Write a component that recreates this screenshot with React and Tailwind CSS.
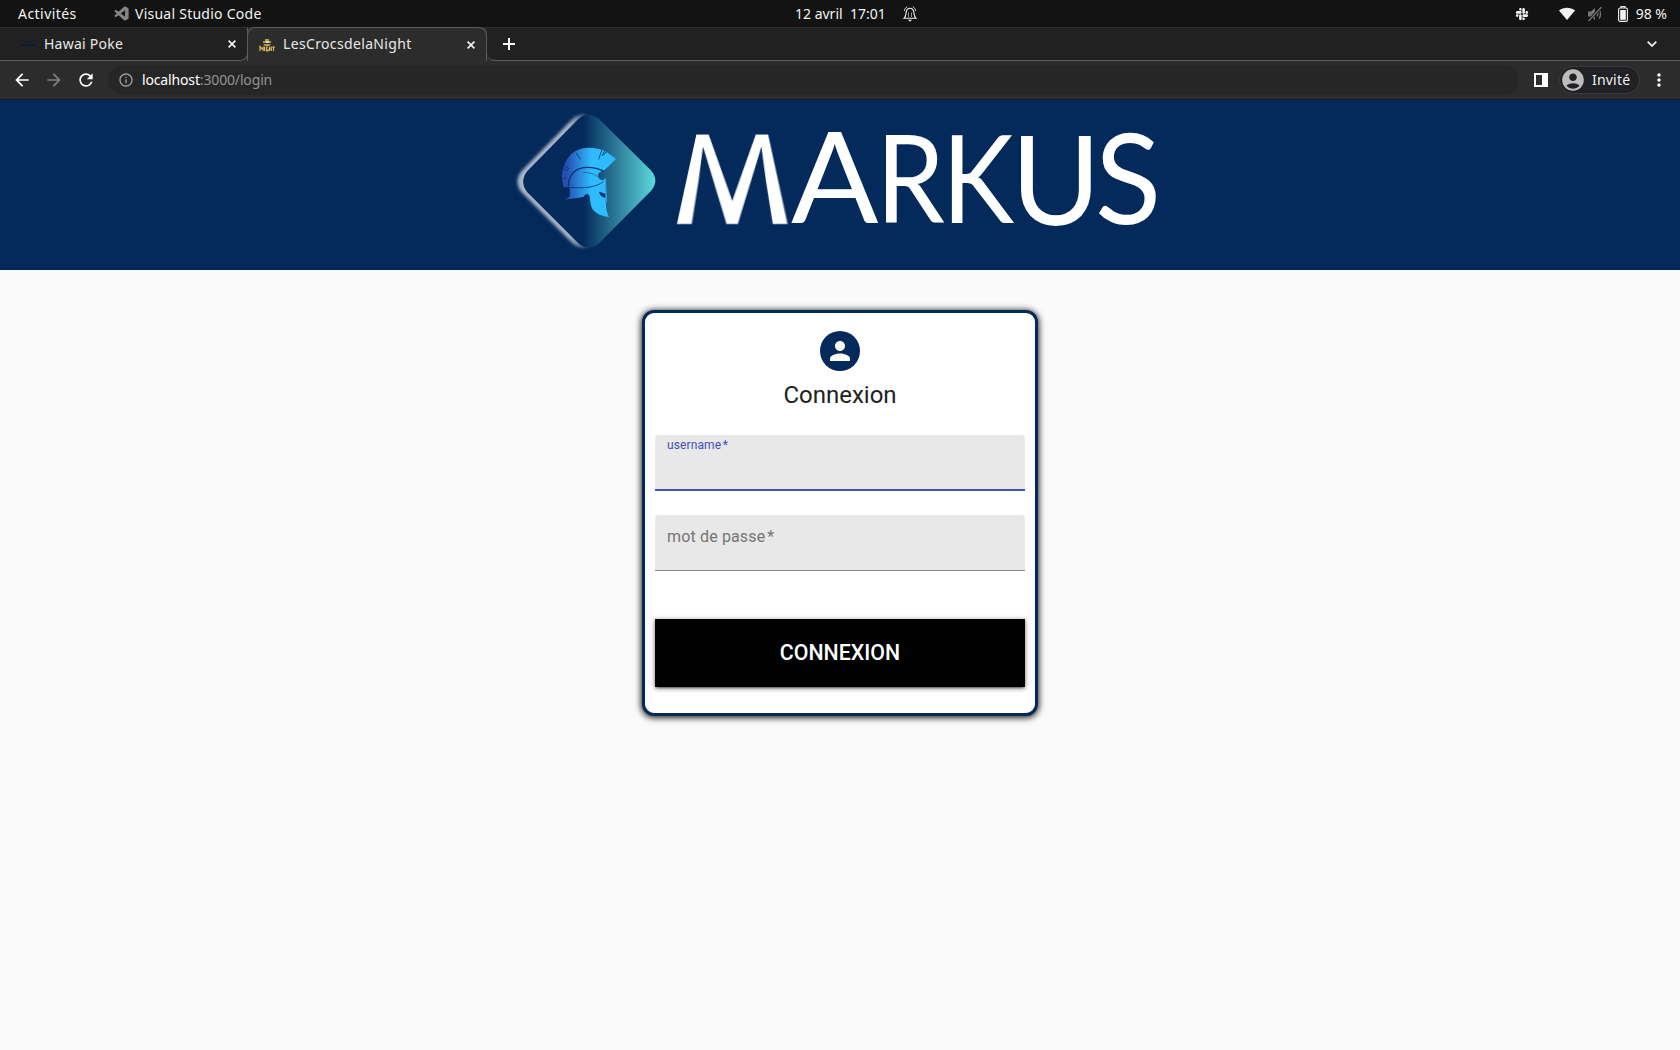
import React from "react";
import {
  MdArrowBack,
  MdArrowForward,
  MdRefresh,
  MdInfoOutline,
  MdAccountCircle,
  MdMoreVert,
  MdPerson,
} from "react-icons/md";
import { FaSlack } from "react-icons/fa";
import { BiLogoVisualStudio } from "react-icons/bi";

function Bell() {
  return (
    <svg className="ml-4 h-4 w-4" viewBox="0 0 16 16" fill="none" stroke="#f2f2f2" strokeWidth="1.1">
      <path d="M2 12.300C4 10.500 3.800 8.500 4.200 6.200 4.600 3.500 6 2.200 8 2.200s3.400 1.300 3.800 4c.4 2.300.2 4.300 2.200 6.100z" />
      <path d="M6.500 11V6.500M9.500 11V6.500" strokeWidth=".6" />
      <path d="M6 13.800h4L8 15.800z" fill="#f2f2f2" stroke="none" />
      <path d="M2.300 5C2.700 3 3.600 1.600 5.200.8M13.700 5C13.300 3 12.400 1.600 10.800.8" strokeWidth=".9" />
    </svg>
  );
}

function Muted() {
  return (
    <svg className="ml-[12px] h-4 w-4" viewBox="0 0 16 16" fill="none" stroke="#777" strokeWidth="1.300">
      <path d="M1 5.500h3L8 2v12l-4-3.500H1z" fill="#777" stroke="none" />
      <path d="M10 5.500c1 1.500 1 3.500 0 5M12 3.500c2 2.500 2 6.500 0 9" />
      <path d="M1.500 15L14.500 1" stroke="#131313" strokeWidth="3" />
      <path d="M1.500 15L14.500 1" strokeWidth="1.200" />
    </svg>
  );
}

function SystemBar() {
  return (
    <div className="grid h-[27px] grid-cols-3 items-center bg-[#131313] text-[14px] leading-[26px] text-[#f2f2f2]">
      <div className="flex items-center pl-[18px]">
        <span className="w-[95px] tracking-[0.45px]">Activités</span>
        <BiLogoVisualStudio className="mr-[5px] h-[17px] w-[17px] text-[#858585]" />
        <span className="tracking-[0.25px]">Visual Studio Code</span>
      </div>
      <div className="flex items-center pl-[235px]">
        <span className="whitespace-pre">{"12 avril  17:01"}</span>
        <Bell />
      </div>
      <div className="flex items-center justify-end pr-[13px]">
        <FaSlack className="h-[14px] w-[14px]" />
        <svg className="ml-[30px] h-[14px] w-4" viewBox="0 0 16 14">
          <path d="M0 3.500C4.500-.2 11.500-.2 16 3.500L8 13z" fill="#f2f2f2" />
        </svg>
        <Muted />
        <svg className="ml-[15px] mr-2 h-4 w-[10px]" viewBox="0 0 10 16" fill="none" stroke="#f2f2f2" strokeWidth="1.100">
          <path d="M3 2V.6h4V2" />
          <rect x=".6" y="2" width="8.800" height="13.400" rx="1.500" />
          <rect x="2.200" y="4" width="5.600" height="9.800" fill="#f2f2f2" stroke="none" />
        </svg>
        <span>98 %</span>
      </div>
    </div>
  );
}

function Close() {
  return (
    <svg className="h-2 w-2" viewBox="0 0 8 8" stroke="#f0f0f0" strokeWidth="1.700">
      <path d="M.6.6l6.800 6.800M7.400.6L.6 7.400" />
    </svg>
  );
}

function TabStrip() {
  return (
    <div className="flex h-[34px] bg-[#2c2c2c] text-[14px] text-[#e8e8e8]">
      <div className="flex w-[248px] items-center rounded-br-lg border-t border-t-[#303030] border-r border-b border-r-[#5b5b5b] border-b-[#5b5b5b] bg-[#212121] pr-[11px] pl-[21px]">
        <svg className="mr-[9px] h-[14px] w-[14px]" viewBox="0 0 14 14" stroke="#0b1838" strokeWidth="2">
          <path d="M4 5h6M0 8h14" strokeDasharray="2 .5" />
        </svg>
        <span className="flex-1 pb-[2px] tracking-[0.25px]">Hawai Poke</span>
        <Close />
      </div>
      <div className="-ml-px flex w-[240px] items-center rounded-t-lg border-t border-r border-l border-[#5b5b5b] bg-[#2c2c2c] pr-[11px] pl-[11px]">
        <svg className="mr-2 h-4 w-4" viewBox="0 0 16 16">
          <path d="M6 2h4v2h2v2H4V4h2zM4 7h8l-2 2H6z" fill="#b69a50" />
          <path d="M7 4h3v2H7z" fill="#ddd8cc" />
          <path d="M1 14V9.500l3 3.500V9.500M5.500 9.500V14M9 10H7.500v4H9v-2M10.500 9.500V14M12.300 9.500V14M10.500 12h2M13 10h3M14.500 10v4" fill="none" stroke="#dab65a" strokeWidth="1.200" />
        </svg>
        <span className="flex-1 pb-[2px] tracking-[0.35px]">LesCrocsdelaNight</span>
        <Close />
      </div>
      <div className="flex flex-1 items-center justify-between rounded-bl-lg border-t border-b border-t-[#303030] border-b-[#5b5b5b] bg-[#212121] pr-[23px] pl-4">
        <svg className="h-3 w-3" viewBox="0 0 12 12" stroke="#f4f4f4" strokeWidth="2">
          <path d="M6 0v12M0 6h12" />
        </svg>
        <svg className="h-[6px] w-[10px]" viewBox="0 0 10 6" fill="none" stroke="#e8e8e8" strokeWidth="1.800">
          <path d="M.7.7L5 5 9.300.7" />
        </svg>
      </div>
    </div>
  );
}

function Toolbar() {
  return (
    <div className="flex h-[39px] items-center border-b border-[#1b1b1b] bg-[#2c2c2c] text-[14px]">
      <MdArrowBack className="ml-[12px] h-5 w-5 text-white" />
      <MdArrowForward className="ml-3 h-5 w-5 text-[#808080]" />
      <MdRefresh className="ml-3 h-5 w-5 text-white" />
      <div className="ml-[12px] flex h-[30px] w-[1411px] items-center rounded-full bg-[#262626] pl-[10px]">
        <MdInfoOutline className="mr-2 h-4 w-4 text-[#9aa0a6]" />
        <span className="pb-[2px] tracking-[-0.15px] text-[#929292]"><span className="text-white">localhost</span>:3000/login</span>
      </div>
      <svg className="ml-[15px] h-[14px] w-[14px]" viewBox="0 0 14 14">
        <path d="M0 0h14v14H0zM2 2v10h6V2z" fill="#fff" fillRule="evenodd" />
      </svg>
      <div className="ml-[11px] flex h-[28px] w-[81px] items-center rounded-full border border-[#3c3c3c] bg-[#202124] text-[#f0f0f0]">
        <MdAccountCircle className="mr-[6px] h-[26px] w-[26px] text-[#bdbdbd]" />
        <span className="pb-[2px] tracking-[0.2px]">Invité</span>
      </div>
      <MdMoreVert className="ml-[9px] h-5 w-5 text-white" />
    </div>
  );
}

function Emblem() {
  const diamond =
    "M235 57Q265 32 297 57L452 210Q480 242 452 274L297 430Q265 456 235 430L82 277Q57 245 82 213Z";
  return (
    <svg className="h-[160px] w-[170px] shrink-0" viewBox="0 0 510 480">
      <defs>
        <linearGradient id="face" gradientUnits="userSpaceOnUse" x1="250" x2="466" y1="0" y2="0">
          <stop offset="0" stopColor="#042a5c" />
          <stop offset="1" stopColor="#5dd9df" />
        </linearGradient>
        <linearGradient id="rim" gradientUnits="userSpaceOnUse" x1="225" x2="310" y1="0" y2="0">
          <stop offset="0" stopColor="#a9b5c8" />
          <stop offset="1" stopColor="#a9b5c8" stopOpacity="0" />
        </linearGradient>
        <linearGradient id="helmet" gradientUnits="userSpaceOnUse" x1="200" x2="275" y1="0" y2="0">
          <stop offset="0" stopColor="#2450b4" />
          <stop offset="1" stopColor="#2fbcff" />
        </linearGradient>
        <filter id="soft" x="-20%" y="-20%" width="140%" height="140%">
          <feGaussianBlur stdDeviation="5" />
        </filter>
      </defs>
      <path d={diamond} fill="url(#rim)" filter="url(#soft)" transform="translate(-17 0)" />
      <path d={diamond} fill="url(#face)" />
      <path
        d="M348 177L319 155C303 146 285 143 265 143C215 144 186 184 186 235L191 262L209 262L210 286Q206 295 193 299L250 291L257 283Q264 279 268 287C271 298 271 316 278 328C289 343 308 349 327 351Q317 332 318 309L321 307L321 286L318 234L309 241Q293 238 294 224Q298 214 310 214Z"
        fill="url(#helmet)"
      />
      <g fill="none" stroke="#0a3470" strokeWidth="2.500">
        <path d="M205 260C205 218 232 202 262 202C287 202 301 208 312 214" strokeWidth="4" />
        <path d="M207 262C252 266 289 262 310 245" />
        <path d="M249 217C268 217 284 222 293 230" strokeWidth="1.500" />
        <path d="M228 158L242 178M306 148L296 178M314 152L306 168M322 154L309 165M192 196L208 207M189 206L203 211M187 236L200 233" />
      </g>
      <path d="M297 275Q309 277 316 282L316 293Q301 292 297 275Z" fill="#08326a" />
      <path d="M318 238V308" stroke="#1a6390" strokeWidth="2" />
    </svg>
  );
}

function Wordmark() {
  return (
    <h1 className="mt-[3px] flex h-[146px] font-['Lato'] text-[122px] leading-[146px] font-normal text-white">
      <span className="w-[121px]">
        <span className="inline-block translate-x-[9px] translate-y-[1px] origin-[50%_114px] font-['Roboto'] [transform:matrix3d(1.28,0,0,0,0,1.58,0,-0.0062,0,0,1,0,0,0,0,1)]">M</span>
      </span>
      <span className="w-[85px]"><span className="inline-block origin-[0_120px] scale-x-[1.06] scale-y-[1.03]">A</span></span>
      <span className="w-[66px]"><span className="inline-block origin-left scale-x-[0.9]">R</span></span>
      <span className="w-[69px]"><span className="inline-block origin-left scale-x-[0.89]">K</span></span>
      <span className="w-[84px]"><span className="inline-block origin-[0_30px] scale-y-[1.02]">U</span></span>
      <span><span className="inline-block scale-y-[1.03]">S</span></span>
    </h1>
  );
}

function LoginCard() {
  return (
    <form className="mx-auto mt-10 flex h-[406px] w-[396px] flex-col items-center rounded-[12px] border-[3px] border-[#042a5c] bg-white px-[10px] pt-[18px] font-['Roboto'] shadow-[0_1px_6px_1px_rgba(0,0,0,0.85)]">
      <div className="flex h-10 w-10 shrink-0 items-center justify-center rounded-full bg-[#042a5c]">
        <MdPerson className="h-[30px] w-[30px] text-[#fafafa]" />
      </div>
      <h2 className="mt-2 text-[24px] leading-8 font-normal text-[#212121]">Connexion</h2>
      <div className="mt-6 h-14 w-full shrink-0 rounded-t border-b-2 border-[#3f51b5] bg-[#e8e8e8] px-3 pt-[3px] text-[12px] leading-[14px] tracking-[0.11px] text-[#3f51b5]">
        username<span className="ml-[1.5px]">*</span>
      </div>
      <div className="mt-6 h-14 w-full shrink-0 rounded-t border-b border-[#858585] bg-[#e8e8e8] px-3 pt-3 text-[16px] leading-[19px] tracking-[0.15px] text-[#757575]">
        mot de passe<span className="ml-[2px]">*</span>
      </div>
      <button type="button" className="mt-12 h-[68px] w-full shrink-0 bg-black pb-px text-[21.33px] font-medium text-white shadow-[0_3px_1px_-2px_rgba(0,0,0,0.2),0_2px_2px_0_rgba(0,0,0,0.14),0_1px_5px_0_rgba(0,0,0,0.5)]">
        CONNEXION
      </button>
    </form>
  );
}

export default function App() {
  return (
    <div className="h-[1050px] w-[1680px] overflow-hidden bg-[#fafafa] font-['Noto_Sans',sans-serif]">
      <SystemBar />
      <TabStrip />
      <Toolbar />
      <header className="flex h-[170px] items-start bg-[#042a5c] pl-[500px]">
        <Emblem />
        <Wordmark />
      </header>
      <LoginCard />
    </div>
  );
}
